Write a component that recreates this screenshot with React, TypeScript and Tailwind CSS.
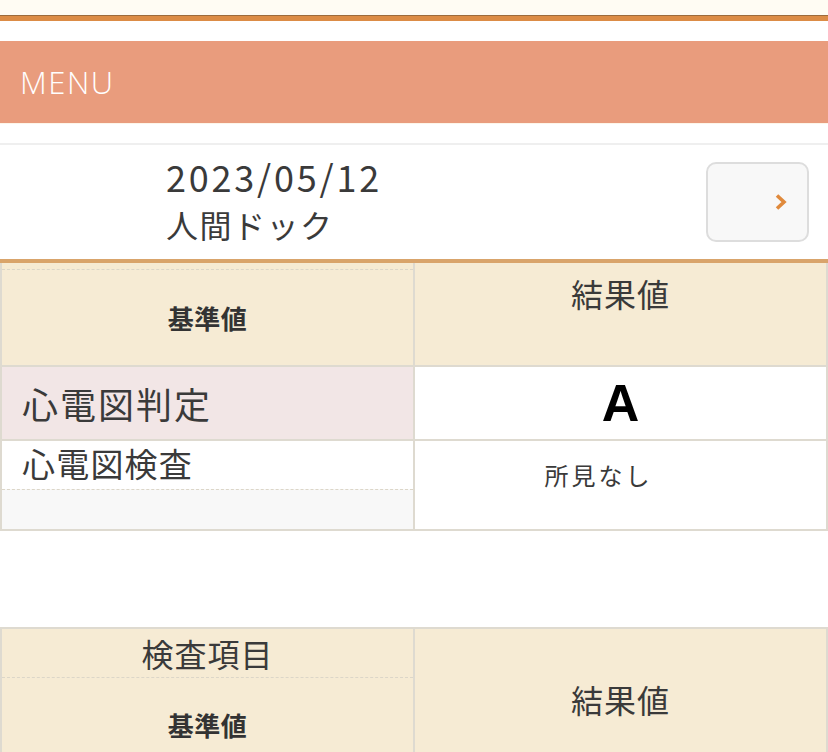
import React from "react";

const jp = { fontFamily: '"Noto Sans CJK JP", "Noto Sans", sans-serif' };

function Chevron() {
  return (
    <svg width="14" height="18" viewBox="0 0 14 18" fill="none">
      <path d="M3 2.5 L10 9 L3 15.5" stroke="#e08a3c" strokeWidth="3.6" strokeLinecap="butt" strokeLinejoin="miter" />
    </svg>
  );
}

export default function App() {
  return (
    <div className="w-[828px] h-[752px] overflow-hidden bg-white text-[#3a3a3a]" style={jp}>
      {/* top header edge */}
      <div className="h-[15px] bg-[#fffcf3]" />
      <div className="h-px bg-[#9c6b3c]" />
      <div className="h-[5px] bg-[#dc8c46]" />
      <div className="h-[20px] bg-white" />

      {/* MENU bar */}
      <div className="h-[82px] bg-[#e99c7d] flex items-center pl-[20px]">
        <span className="text-[31px] font-light text-white tracking-[1.5px] leading-none" style={{ fontFamily: '"Open Sans", "Noto Sans", sans-serif' }}>MENU</span>
      </div>
      <div className="h-px bg-[#fdf6ea]" />
      <div className="h-[19px] bg-white" />
      <div className="h-[2px] bg-[#efefef]" />

      {/* date row */}
      <div className="h-[114px] flex items-center justify-between pl-[166px] pr-[19px]">
        <div className="flex flex-col -mt-[4px]">
          <span className="text-[36px] leading-[48px] tracking-[2.8px] text-[#3a3a3a]">2023/05/12</span>
          <span className="text-[32px] leading-[48px] tracking-[1.5px] text-[#3a3a3a]">人間ドック</span>
        </div>
        <div className="w-[103px] h-[80px] rounded-[10px] border-2 border-[#dddddd] bg-[#f8f8f8] flex items-center justify-end pr-[19px]">
          <Chevron />
        </div>
      </div>
      <div className="h-[4px] bg-[#d9a46b]" />

      {/* table 1 */}
      <div className="grid grid-cols-2 gap-[2px] bg-[#dedad0] px-[2px] pb-[2px]">
        {/* header left */}
        <div className="h-[102px] bg-[#f6ebd4] flex flex-col">
          <div className="h-[7px] border-b border-dashed border-[#dcd6c8]" />
          <div className="flex-1 flex items-center justify-center">
            <span className="text-[26px] font-bold text-[#333] tracking-[0.5px]">基準値</span>
          </div>
        </div>
        {/* header right */}
        <div className="h-[102px] bg-[#f6ebd4] flex justify-center pt-[10px]">
          <span className="text-[32px] leading-[40px] tracking-[1px]">結果値</span>
        </div>

        {/* row 1 */}
        <div className="h-[72px] bg-[#f2e6e6] flex items-center pl-[20px]">
          <span className="text-[36px] tracking-[2px] leading-none">心電図判定</span>
        </div>
        <div className="h-[72px] bg-white flex items-center justify-center">
          <span className="text-[52px] font-bold text-black leading-none" style={{ fontFamily: '"Liberation Sans", Arial, sans-serif' }}>A</span>
        </div>

        {/* row 2 */}
        <div className="h-[88px] bg-white flex flex-col">
          <div className="h-[48px] flex items-center pl-[20px] pb-[4px]">
            <span className="text-[33px] tracking-[1.2px] leading-none">心電図検査</span>
          </div>
          <div className="flex-1 border-t border-dashed border-[#dcd6c8] bg-[#f8f8f8]" />
        </div>
        <div className="h-[88px] bg-white flex justify-center pt-[18px] pr-[44px]">
          <span className="text-[24px] tracking-[3px] leading-[32px]">所見なし</span>
        </div>
      </div>

      <div className="h-[96px] bg-white" />

      {/* table 2 */}
      <div className="grid grid-cols-2 gap-[2px] bg-[#dedad0] px-[2px] pt-[2px] pb-[2px]">
        <div className="h-[160px] bg-[#f6ebd4] flex flex-col">
          <div className="h-[49px] flex items-center justify-center border-b border-dashed border-[#dcd6c8]">
            <span className="text-[32px] tracking-[1px] leading-none">検査項目</span>
          </div>
          <div className="h-[92px] flex items-center justify-center">
            <span className="text-[26px] font-bold text-[#333] tracking-[0.5px]">基準値</span>
          </div>
        </div>
        <div className="h-[160px] bg-[#f6ebd4] flex justify-center pt-[50px]">
          <span className="text-[32px] leading-[40px] tracking-[1px]">結果値</span>
        </div>
      </div>
    </div>
  );
}
